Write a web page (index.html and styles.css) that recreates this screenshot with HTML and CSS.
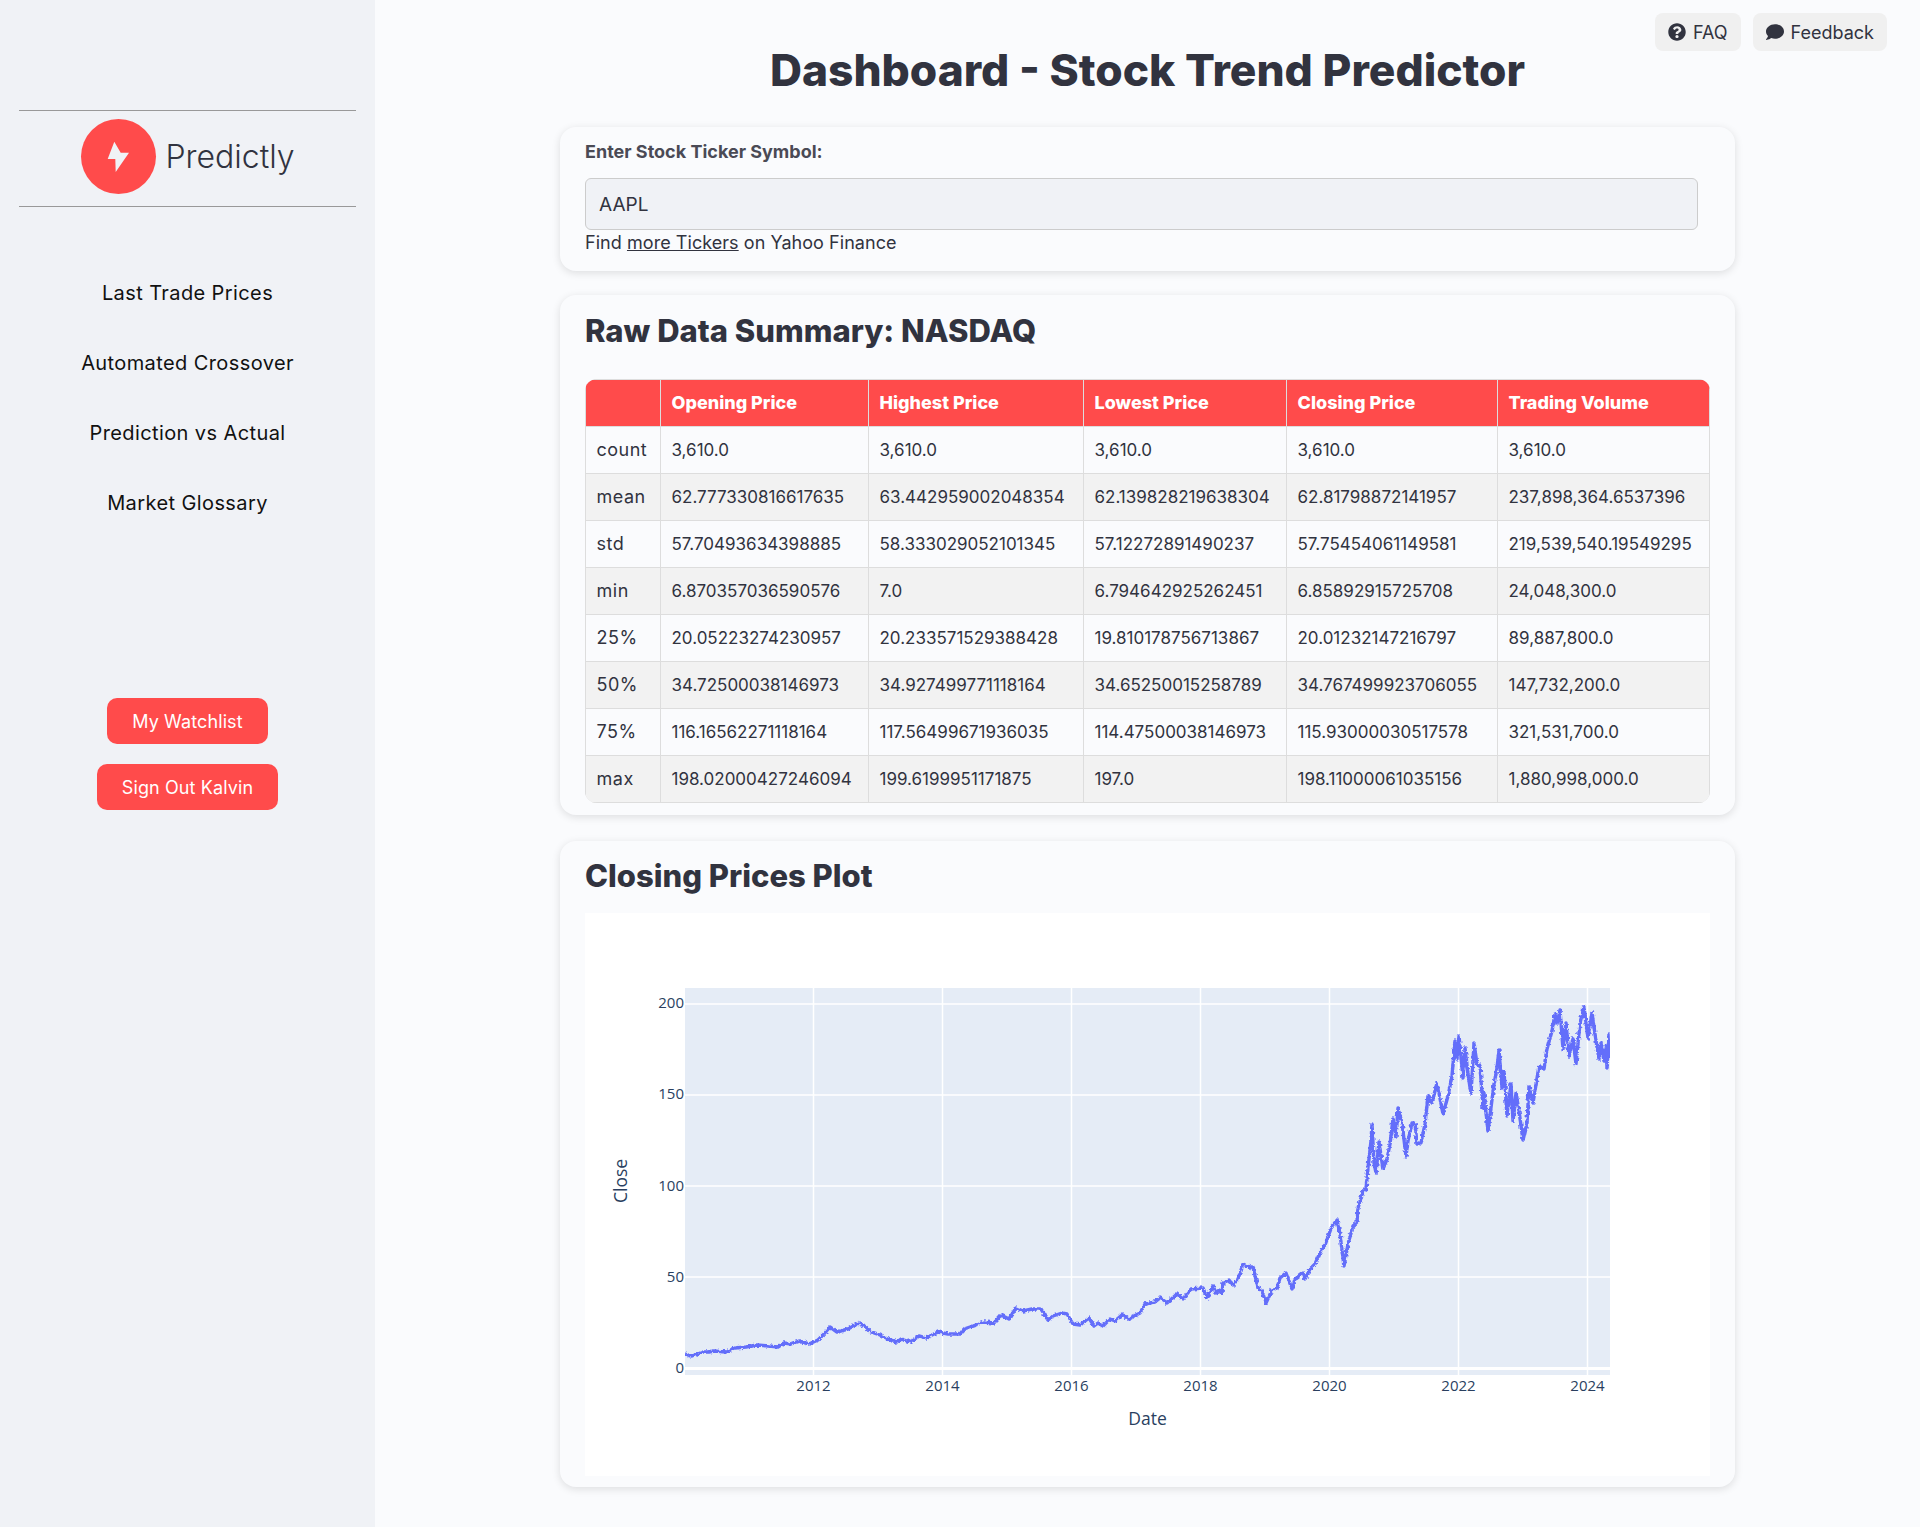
FILE: index.html

```html
<!DOCTYPE html>
<html lang="en">
<head>
  <meta charset="UTF-8">
  <meta name="viewport" content="width=device-width, initial-scale=1.0">
  <title>Dashboard - Stock Trend Predictor</title>
  <link rel="stylesheet" href="styles.css">
</head>
<body>
  <aside class="sidebar">
    <div class="brand">
      <div class="brand-logo">
        <svg viewBox="0 0 75 75" width="75" height="75"><polygon points="33.3,22.7 26.7,40 34.3,40 34.7,53 48,33.7 39.7,33.7" fill="#f0f2f6"/></svg>
      </div>
      <span class="brand-name">Predictly</span>
    </div>
    <nav class="side-nav">
      <a>Last Trade Prices</a>
      <a>Automated Crossover</a>
      <a>Prediction vs Actual</a>
      <a>Market Glossary</a>
    </nav>
    <div class="side-actions">
      <button class="red-btn">My Watchlist</button>
      <button class="red-btn">Sign Out Kalvin</button>
    </div>
  </aside>

  <main class="main">
    <div class="top-links">
      <a class="top-link">
        <svg viewBox="0 0 512 512" width="18" height="18"><path fill="#31333f" d="M504 256c0 136.997-111.043 248-248 248S8 392.997 8 256C8 119.083 119.043 8 256 8s248 111.083 248 248zM262.655 90c-54.497 0-89.255 22.957-116.549 63.758-3.536 5.286-2.353 12.415 2.715 16.258l34.699 26.31c5.205 3.947 12.621 3.008 16.665-2.122 17.864-22.658 30.113-35.797 57.303-35.797 20.429 0 45.698 13.148 45.698 32.958 0 14.976-12.363 22.667-32.534 33.976C247.128 238.528 216 254.941 216 296v4c0 6.627 5.373 12 12 12h56c6.627 0 12-5.373 12-12v-1.333c0-28.462 83.186-29.647 83.186-106.667 0-58.002-60.165-102-116.531-102zM256 338c-25.365 0-46 20.635-46 46 0 25.364 20.635 46 46 46s46-20.636 46-46c0-25.365-20.635-46-46-46z"/></svg>
        FAQ
      </a>
      <a class="top-link">
        <svg viewBox="0 0 512 512" width="18" height="18"><path fill="#31333f" d="M256 32C114.6 32 0 125.1 0 240c0 49.6 21.4 95 57 130.7C44.5 421.1 2.7 466 2.2 466.5c-2.2 2.3-2.8 5.7-1.5 8.7S4.8 480 8 480c66.3 0 116-31.8 140.6-51.4 32.7 12.3 69 19.4 107.4 19.4 141.4 0 256-93.1 256-208S397.4 32 256 32z"/></svg>
        Feedback
      </a>
    </div>

    <h1 class="page-title">Dashboard - Stock Trend Predictor</h1>

    <section class="card ticker-card">
      <label class="ticker-label" for="ticker">Enter Stock Ticker Symbol:</label>
      <input class="ticker-input" id="ticker" type="text" value="AAPL">
      <p class="ticker-note">Find <a href="#">more Tickers</a> on Yahoo Finance</p>
    </section>

    <section class="card table-card">
      <h2>Raw Data Summary: NASDAQ</h2>
      <div class="table-wrap">
        <table>
          <thead>
            <tr><th></th><th>Opening Price</th><th>Highest Price</th><th>Lowest Price</th><th>Closing Price</th><th>Trading Volume</th></tr>
          </thead>
          <tbody>
            <tr><td>count</td><td>3,610.0</td><td>3,610.0</td><td>3,610.0</td><td>3,610.0</td><td>3,610.0</td></tr>
            <tr><td>mean</td><td>62.777330816617635</td><td>63.442959002048354</td><td>62.139828219638304</td><td>62.81798872141957</td><td>237,898,364.6537396</td></tr>
            <tr><td>std</td><td>57.70493634398885</td><td>58.333029052101345</td><td>57.12272891490237</td><td>57.75454061149581</td><td>219,539,540.19549295</td></tr>
            <tr><td>min</td><td>6.870357036590576</td><td>7.0</td><td>6.794642925262451</td><td>6.85892915725708</td><td>24,048,300.0</td></tr>
            <tr><td>25%</td><td>20.05223274230957</td><td>20.233571529388428</td><td>19.810178756713867</td><td>20.01232147216797</td><td>89,887,800.0</td></tr>
            <tr><td>50%</td><td>34.72500038146973</td><td>34.927499771118164</td><td>34.65250015258789</td><td>34.767499923706055</td><td>147,732,200.0</td></tr>
            <tr><td>75%</td><td>116.16562271118164</td><td>117.56499671936035</td><td>114.47500038146973</td><td>115.93000030517578</td><td>321,531,700.0</td></tr>
            <tr><td>max</td><td>198.02000427246094</td><td>199.6199951171875</td><td>197.0</td><td>198.11000061035156</td><td>1,880,998,000.0</td></tr>
          </tbody>
        </table>
      </div>
    </section>

    <section class="card plot-card">
      <h2>Closing Prices Plot</h2>
      <div class="plot">
        <!-- viewBox uses page coordinates so the points line up with the screenshot -->
        <svg viewBox="585 912 1125 563" width="1125" height="563">
          <defs>
            <clipPath id="plot-clip"><rect x="685" y="987" width="925" height="387"/></clipPath>
            <filter id="daily-noise" x="-2%" y="-2%" width="104%" height="104%">
              <feTurbulence type="fractalNoise" baseFrequency="0.35" numOctaves="2" seed="7"/>
              <feDisplacementMap in="SourceGraphic" scale="4" xChannelSelector="R" yChannelSelector="G"/>
            </filter>
          </defs>
          <rect class="plot-bg" x="685" y="987" width="925" height="387"/>
          <g class="grid">
            <line x1="813.5" y1="987" x2="813.5" y2="1374"/>
            <line x1="942.5" y1="987" x2="942.5" y2="1374"/>
            <line x1="1071.5" y1="987" x2="1071.5" y2="1374"/>
            <line x1="1200.5" y1="987" x2="1200.5" y2="1374"/>
            <line x1="1329.5" y1="987" x2="1329.5" y2="1374"/>
            <line x1="1458.5" y1="987" x2="1458.5" y2="1374"/>
            <line x1="1587.5" y1="987" x2="1587.5" y2="1374"/>
            <line x1="685" y1="1003" x2="1610" y2="1003"/>
            <line x1="685" y1="1094" x2="1610" y2="1094"/>
            <line x1="685" y1="1185" x2="1610" y2="1185"/>
            <line x1="685" y1="1276" x2="1610" y2="1276"/>
            <line class="zero" x1="685" y1="1367.5" x2="1610" y2="1367.5"/>
          </g>
          <g clip-path="url(#plot-clip)">
            <polyline class="trace" filter="url(#daily-noise)" points="685,1353 692,1355 703,1351 709,1351 714,1350 726,1351 735,1347 746,1346 757,1344 769,1345 778,1346 784,1342 791,1343 799,1340 809,1343 818,1339 824,1333 830,1326 837,1331 848,1328 859,1322 866,1326 871,1331 880,1334 887,1338 897,1341 901,1338 910,1341 919,1335 926,1337 938,1331 948,1333 960,1333 964,1328 973,1325 984,1321 994,1322 1001,1314 1009,1318 1016,1307 1023,1310 1032,1308 1041,1308 1048,1319 1053,1315 1062,1312 1067,1313 1073,1323 1080,1324 1089,1317 1094,1325 1098,1322 1103,1325 1110,1318 1115,1320 1123,1313 1128,1318 1140,1312 1145,1303 1155,1301 1160,1297 1167,1302 1177,1293 1183,1298 1191,1288 1203,1287 1207,1297 1213,1285 1216,1292 1219,1289 1222,1293 1223,1282 1229,1279 1233,1284 1238,1278 1243,1263 1249,1266 1253,1266 1258,1287 1262,1290 1266,1302 1272,1289 1277,1287 1280,1277 1286,1272 1292,1288 1295,1278 1303,1272 1305,1278 1310,1268 1315,1263 1322,1247 1325,1244 1332,1225 1337,1219 1340,1233 1344,1265 1348,1243 1353,1225 1357,1221 1358,1207 1363,1190 1366,1188 1368,1167 1369,1158 1371,1140 1372,1123 1374,1162 1376,1172 1379,1141 1383,1168 1387,1158 1390,1143 1393,1118 1396,1136 1398,1107 1402,1122 1406,1155 1408,1140 1412,1122 1415,1122 1417,1143 1421,1142 1425,1123 1428,1095 1432,1102 1437,1082 1443,1113 1448,1095 1452,1075 1455,1040 1457,1058 1459,1035 1463,1077 1465,1047 1468,1073 1471,1093 1474,1042 1477,1063 1480,1065 1483,1107 1484,1092 1488,1130 1494,1083 1497,1067 1499,1049 1502,1087 1504,1070 1507,1115 1511,1083 1513,1120 1516,1092 1519,1110 1523,1139 1527,1122 1529,1085 1533,1102 1539,1065 1544,1068 1547,1048 1552,1030 1555,1013 1557,1023 1560,1009 1563,1048 1566,1022 1569,1055 1573,1038 1576,1063 1580,1022 1584,1006 1588,1037 1592,1012 1595,1033 1599,1058 1601,1042 1604,1060 1606,1045 1607,1067 1609,1033 1610,1057"/>
          </g>
          <g class="ticks-y">
            <text x="684" y="1007">200</text>
            <text x="684" y="1098">150</text>
            <text x="684" y="1190">100</text>
            <text x="684" y="1281">50</text>
            <text x="684" y="1372">0</text>
          </g>
          <g class="ticks-x">
            <text x="813.5" y="1390">2012</text>
            <text x="942.5" y="1390">2014</text>
            <text x="1071.5" y="1390">2016</text>
            <text x="1200.5" y="1390">2018</text>
            <text x="1329.5" y="1390">2020</text>
            <text x="1458.5" y="1390">2022</text>
            <text x="1587.5" y="1390">2024</text>
          </g>
          <text class="axis-title" x="1147.5" y="1424">Date</text>
          <text class="axis-title" transform="translate(627 1180) rotate(-90)">Close</text>
        </svg>
      </div>
    </section>
  </main>
</body>
</html>
```

FILE: styles.css

```css
* {
  box-sizing: border-box;
}
body {
  margin: 0;
  display: flex;
  min-height: 1527px;
  font-family: Inter, "Open Sans", sans-serif;
  color: #31333f;
  background-color: #fafbfd;
}

/* sidebar */
.sidebar {
  width: 375px;
  flex-shrink: 0;
  padding-top: 110px;
  background-color: #f0f2f6;
}
.brand {
  display: flex;
  align-items: center;
  justify-content: center;
  gap: 9px;
  height: 97px;
  margin: 0 19px;
  padding: 0 0 4px 1px;
  border-top: 1.5px solid #999;
  border-bottom: 1.5px solid #999;
}
.brand-logo {
  width: 75px;
  height: 75px;
  border-radius: 50%;
  background-color: #ff4b4b;
}
.brand-name {
  font-size: 32px;
  font-weight: 300;
  line-height: 70px;
}
.side-nav {
  display: flex;
  flex-direction: column;
  align-items: center;
  margin-top: 51px;
}
.side-nav a {
  line-height: 70px;
  font-size: 20px;
  letter-spacing: 0.4px;
  color: #111;
}
.side-actions {
  display: flex;
  flex-direction: column;
  align-items: center;
  gap: 20px;
  margin-top: 160px;
}
.red-btn {
  height: 46px;
  padding: 0 25px;
  border: none;
  border-radius: 10px;
  font-family: inherit;
  font-size: 18px;
  letter-spacing: 0.1px;
  color: #fff;
  background-color: #ff4b4b;
}

/* main column */
.main {
  position: relative;
  flex: 1;
  display: flex;
  flex-direction: column;
  align-items: center;
}
.top-links {
  position: absolute;
  top: 13px;
  right: 33px;
  display: flex;
  gap: 12px;
}
.top-link {
  display: flex;
  align-items: center;
  gap: 7px;
  height: 38px;
  padding: 0 13px;
  border-radius: 8px;
  font-size: 18px;
  background-color: #f0f0f0;
}
.page-title {
  margin: 39.5px 0 27.5px;
  line-height: 60px;
  font-size: 44.3px;
  font-weight: 800;
}
.card {
  width: 1175px;
  padding: 13px 25px;
  border-radius: 16px;
  background-color: #fafbfd;
  box-shadow: 0 2px 8px rgba(0, 0, 0, 0.12);
}
.card h2 {
  margin: 0;
  line-height: 45px;
  font-size: 31px;
  font-weight: 800;
}

/* ticker box */
.ticker-card {
  height: 144px;
}
.ticker-label {
  display: block;
  line-height: 24px;
  font-size: 18px;
  font-weight: 700;
  color: #4a4a55;
}
.ticker-input {
  display: block;
  width: 1113px;
  height: 52px;
  margin-top: 14px;
  padding: 0 13px;
  border: 1.5px solid #ccc;
  border-radius: 6px;
  font-family: inherit;
  font-size: 19px;
  color: #31333f;
  background-color: #f0f2f6;
}
.ticker-note {
  margin: 0;
  line-height: 26px;
  font-size: 18px;
  letter-spacing: 0.05px;
}
.ticker-note a {
  color: inherit;
}

/* summary table */
.table-card {
  height: 520px;
  margin-top: 24px;
}
.table-wrap {
  width: 1125px;
  margin-top: 26px;
  border-radius: 12px;
  overflow: hidden;
  box-shadow: 0 0 0 1px #ddd inset;
}
table {
  width: 1125px;
  border-collapse: collapse;
  table-layout: fixed;
  font-size: 17px;
}
th, td {
  height: 47px;
  padding: 0 0 0 10.5px;
  border: 1px solid #ddd;
  text-align: left;
  white-space: nowrap;
}
th {
  padding-bottom: 1px;
  font-size: 18px;
  font-weight: 800;
  color: #fff;
  background-color: #ff4b4b;
}
td:first-child {
  padding-bottom: 1px;
  font-size: 18px;
  letter-spacing: 0.5px;
}
tbody tr:nth-child(even) {
  background-color: #f2f2f2;
}
th:nth-child(1) { width: 75px; }
th:nth-child(2) { width: 208px; }
th:nth-child(3) { width: 215px; }
th:nth-child(4) { width: 203px; }
th:nth-child(5) { width: 211px; }

/* plot */
.plot-card {
  height: 646px;
  margin-top: 26px;
  padding-top: 12px;
}
.plot {
  width: 1125px;
  height: 563px;
  margin-top: 15px;
  background-color: #fff;
}
.plot svg {
  display: block;
  font-family: "Open Sans", sans-serif;
}
.plot-bg {
  fill: #e5ecf6;
}
.grid line {
  stroke: #fff;
  stroke-width: 1.5;
}
.grid .zero {
  stroke-width: 3;
}
.trace {
  fill: none;
  stroke: #636efa;
  stroke-width: 3.4;
  stroke-linejoin: round;
}
.ticks-y text {
  font-size: 15px;
  fill: #2a3f5f;
  text-anchor: end;
}
.ticks-x text {
  font-size: 15px;
  fill: #2a3f5f;
  text-anchor: middle;
}
.axis-title {
  font-size: 17.5px;
  fill: #2a3f5f;
  text-anchor: middle;
}
```
